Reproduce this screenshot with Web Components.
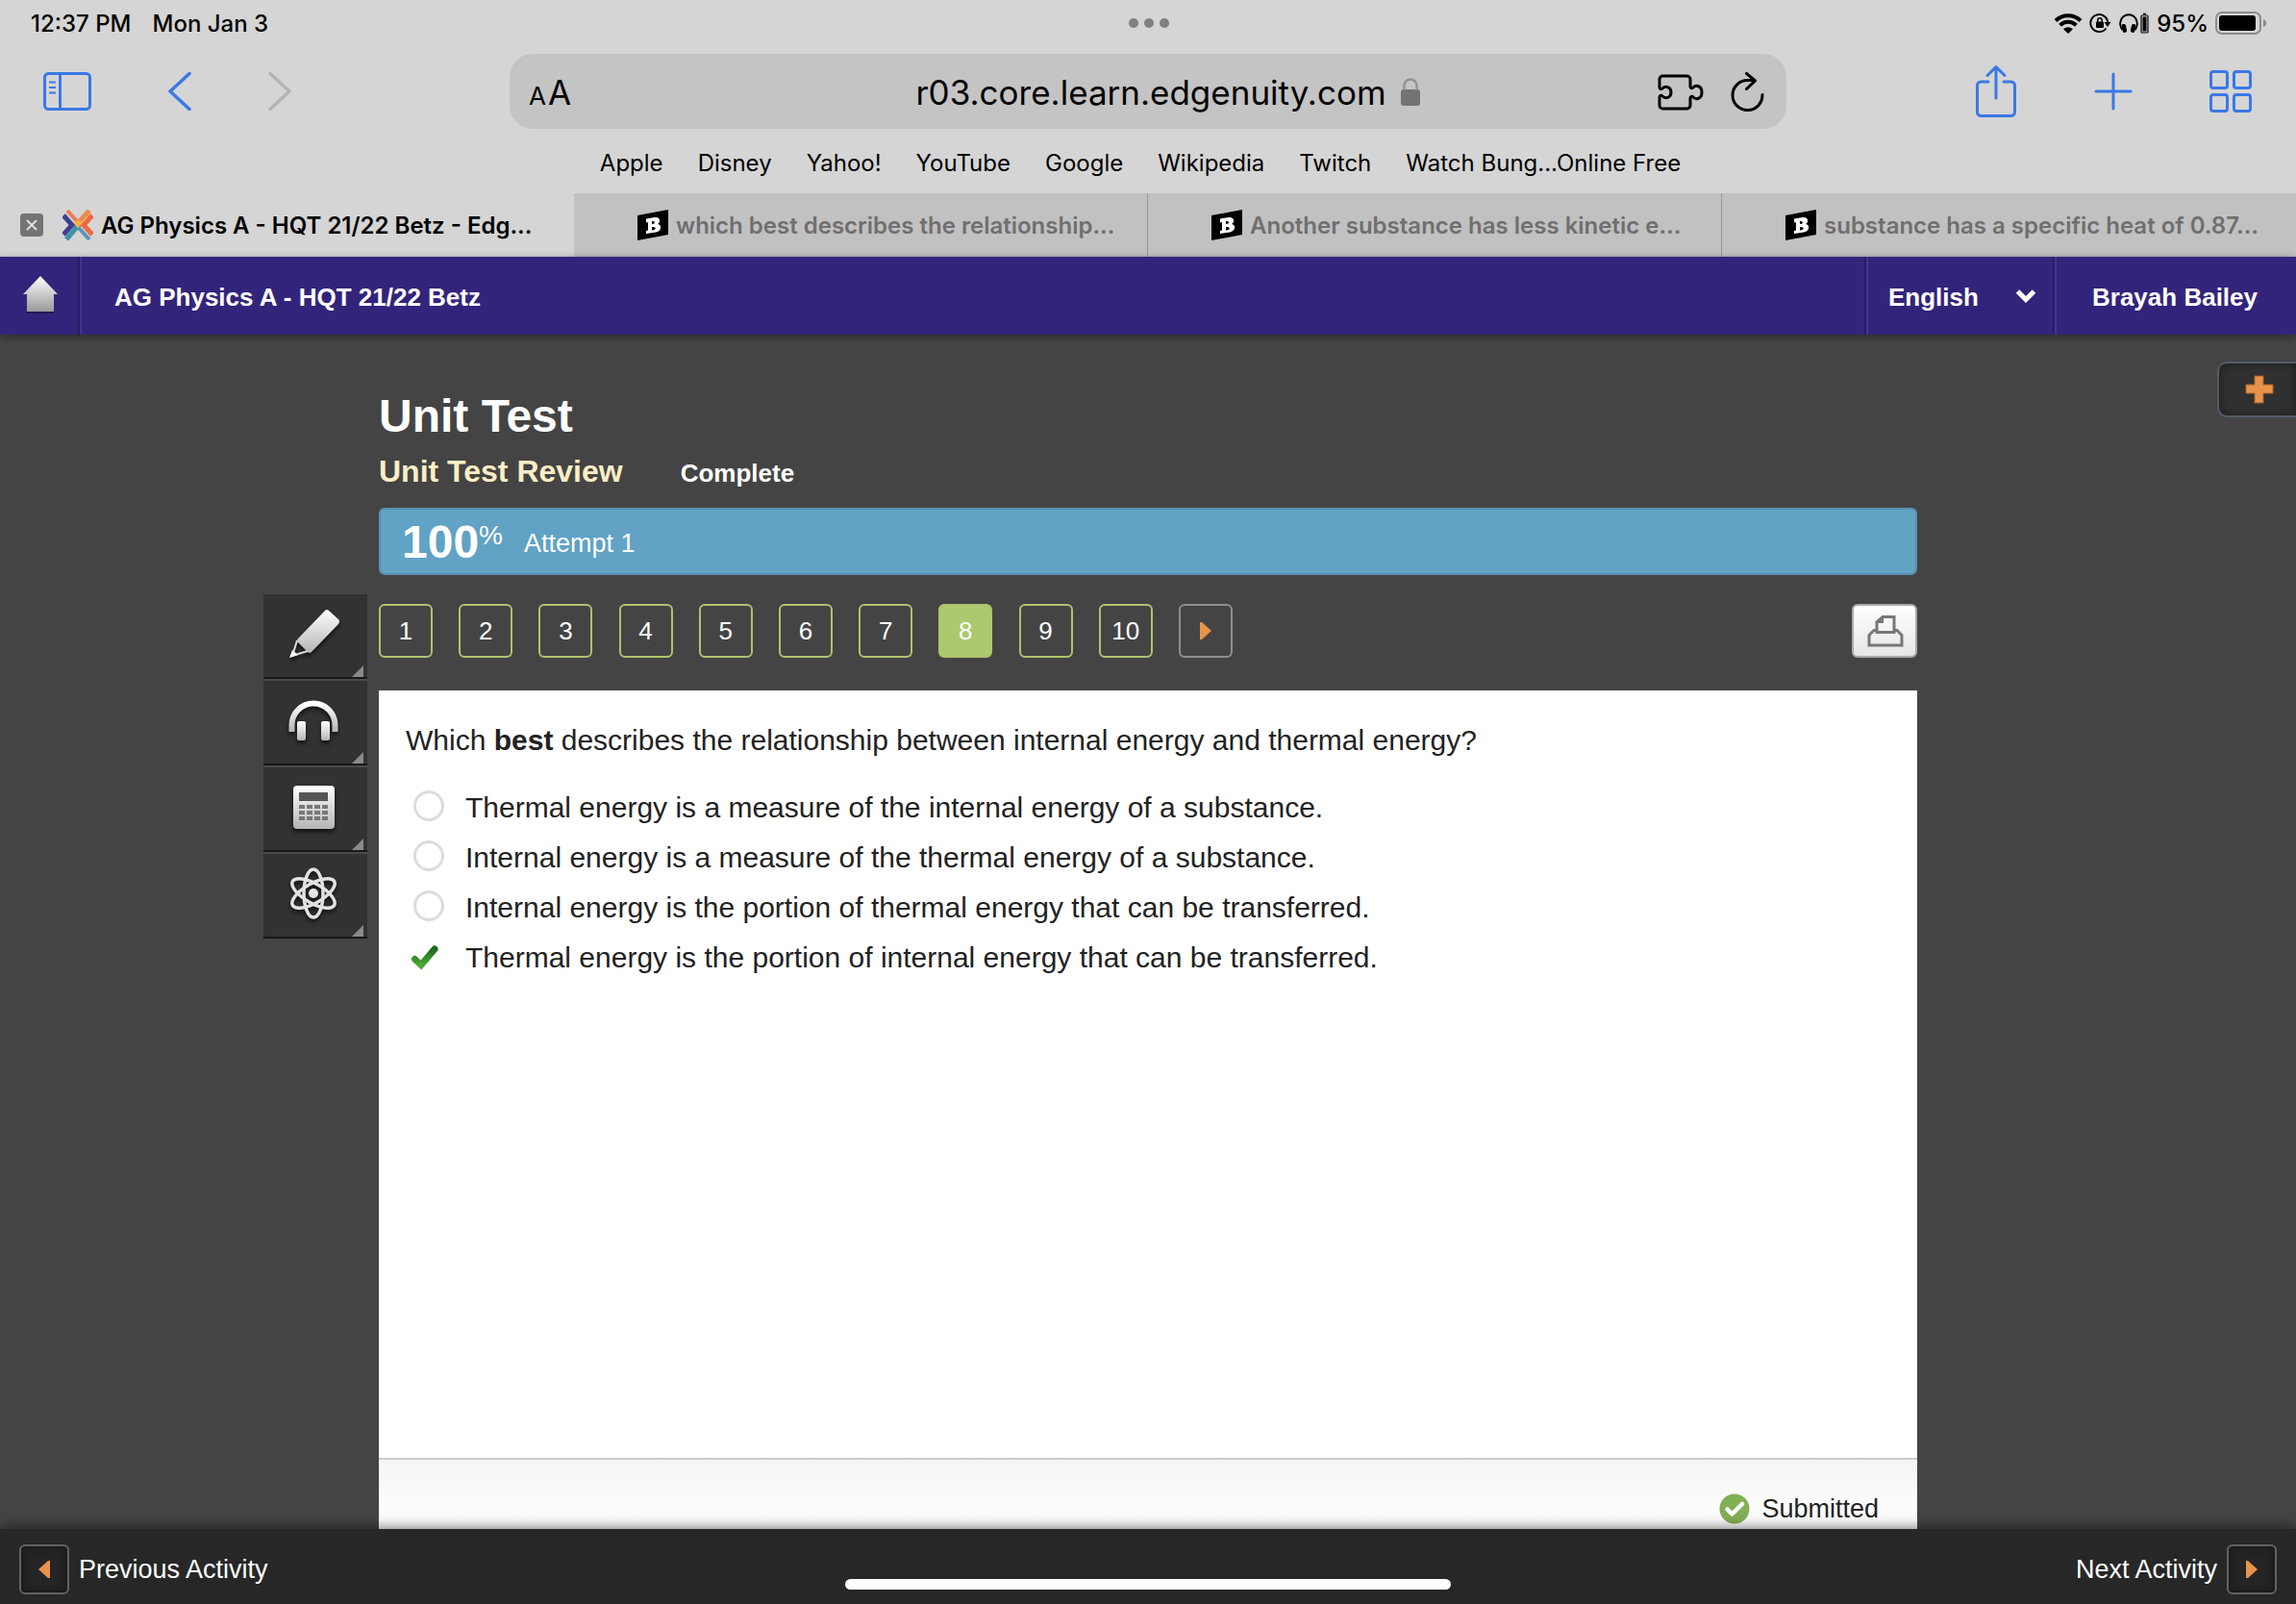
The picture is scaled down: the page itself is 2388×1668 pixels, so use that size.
<!DOCTYPE html>
<html lang="en">
<head>
<meta charset="UTF-8">
<meta name="viewport" content="width=device-width, initial-scale=1">
<title>AG Physics A - HQT 21/22 Betz - Edgenuity</title>
<style>
  html, body {
    margin: 0;
    height: 100%;
  }
  body {
    font-family: "Liberation Sans", Arial, Helvetica, sans-serif;
    font-size: 26px;
    color: #fff;
    background: #444;
  }
</style>
</head>
<body>
<page-shell>
  <browser-chrome slot="chrome"></browser-chrome>
  <course-header slot="header" course="AG Physics A - HQT 21/22 Betz" student="Brayah Bailey"></course-header>
  <activity-stage slot="stage">
    <activity-heading slot="heading" name="Unit Test" step="Unit Test Review" status="Complete" score="100" attempt="Attempt 1"></activity-heading>
    <side-drawer slot="drawer"></side-drawer>
    <tool-palette slot="tools"></tool-palette>
    <question-nav slot="nav" total="10" current="8"></question-nav>
    <question-card slot="card">
      <span slot="question">Which <b>best</b> describes the relationship between internal energy and thermal energy?</span>
    </question-card>
  </activity-stage>
  <activity-footer slot="footer"></activity-footer>
</page-shell>

<script>
const ICONS = {
  wifi: `<svg width="30" height="22" viewBox="0 0 30 22"><g fill="none" stroke="#000" stroke-width="4"><path d="M2 8.500a18.500 18.500 0 0 1 26 0"/><path d="M6.600 13.200a12 12 0 0 1 16.800 0"/></g><path d="M10 17.300a7.200 7.200 0 0 1 10 0L15 22z"/></svg>`,
  rotation: `<svg width="24" height="22" viewBox="0 0 24 22"><path d="M17.500 16.500a9 9 0 1 1 1.800-6" fill="none" stroke="#000" stroke-width="2"/><path d="M15.500 10h7l-3.500 5z"/><rect x="7" y="9.500" width="8" height="6.500" rx="1"/><path d="M8.800 10V8a2.200 2.200 0 0 1 4.400 0v2" fill="none" stroke="#000" stroke-width="1.500"/></svg>`,
  pods: `<svg width="32" height="22" viewBox="0 0 32 22"><path d="M3.500 18C1 15 1 11 1.500 9.500a8.600 8.600 0 0 1 17 0c.500 1.500.500 5.500-2 8.500" fill="none" stroke="#000" stroke-width="2"/><rect x="3" y="12" width="4.500" height="9" rx="2" transform="rotate(-12 5 16)"/><rect x="12.500" y="12" width="4.500" height="9" rx="2" transform="rotate(12 15 16)"/><rect x="23" y="3" width="7" height="18" rx="1" fill="none" stroke="#000" stroke-width="1.200"/><rect x="24.500" y="4.500" width="4" height="15"/><path d="M25 1.500h3" stroke="#000" stroke-width="1.500"/></svg>`,
  battery: `<svg width="54" height="24" viewBox="0 0 54 24"><rect x="1" y="1" width="46" height="22" rx="6" fill="none" stroke="#8c8c8c" stroke-width="2"/><rect x="4" y="4" width="38" height="16" rx="3"/><path d="M50 8c4 1 4 7 0 8z" fill="#8c8c8c"/></svg>`,
  dots: `<svg width="42" height="10" viewBox="0 0 42 10" fill="#808080"><circle cx="5" cy="5" r="5"/><circle cx="21" cy="5" r="5"/><circle cx="37" cy="5" r="5"/></svg>`,
  sidebar: `<svg width="50" height="40" viewBox="0 0 50 40" fill="none" stroke="#3a78e6" stroke-width="3"><rect x="1.500" y="1.500" width="47" height="37" rx="4"/><path d="M17.500 2v36"/><path d="M6 10.500h7M6 16h7M6 21.500h7" stroke-width="2"/></svg>`,
  back: `<svg width="24" height="40" viewBox="0 0 24 40"><path d="M22 1.500L2 20l20 18.500" fill="none" stroke="#3a78e6" stroke-width="3.500" stroke-linecap="round" stroke-linejoin="round"/></svg>`,
  forward: `<svg width="24" height="40" viewBox="0 0 24 40"><path d="M2 1.500L22 20 2 38.500" fill="none" stroke="#b4b4b4" stroke-width="3.500" stroke-linecap="round" stroke-linejoin="round"/></svg>`,
  lock: `<svg width="22" height="30" viewBox="0 0 22 30"><rect x="1" y="12" width="20" height="17" rx="3" fill="#737376"/><path d="M4.500 13V8a6.500 6.500 0 0 1 13 0v5" fill="none" stroke="#939395" stroke-width="2.500"/></svg>`,
  puzzle: `<svg width="48" height="38" viewBox="0 0 48 38" fill="none" stroke="#000" stroke-width="3" stroke-linejoin="round"><path d="M2 14V5.500A3.500 3.500 0 0 1 5.500 2h25A3.500 3.500 0 0 1 34 5.500V13c0 2 2 2 3 1 3-3 9-2 9 5s-6 8-9 5c-1-1-3-1-3 1v7.500a3.500 3.500 0 0 1-3.500 3.500h-25A3.500 3.500 0 0 1 2 32.500V24c0-2 2-2 3-1 3 3 9 2 9-4s-6-7-9-4c-1 1-3 1-3-1z"/></svg>`,
  reload: `<svg width="36" height="42" viewBox="0 0 36 42" fill="none" stroke="#000" stroke-width="3" stroke-linecap="round" stroke-linejoin="round"><path d="M33 23.500A15.500 15.500 0 1 1 17.500 8.500h7"/><path d="M16.500 1.500l9 7.300-9 8.700"/></svg>`,
  share: `<svg width="44" height="56" viewBox="0 0 44 56" fill="none" stroke="#3a78e6" stroke-width="3" stroke-linecap="round" stroke-linejoin="round"><path d="M14 18H6.500a4 4 0 0 0-4 4v27.500a4 4 0 0 0 4 4h31a4 4 0 0 0 4-4V22a4 4 0 0 0-4-4H30"/><path d="M22 35V2.500M13 11.500l9-9 9 9"/></svg>`,
  plus: `<svg width="40" height="40" viewBox="0 0 40 40"><path d="M20 2v36M2 20h36" stroke="#3a78e6" stroke-width="3" stroke-linecap="round"/></svg>`,
  grid: `<svg width="44" height="44" viewBox="0 0 44 44" fill="none" stroke="#3a78e6" stroke-width="3"><rect x="1.500" y="1.500" width="17" height="17" rx="2.500"/><rect x="25.500" y="1.500" width="17" height="17" rx="2.500"/><rect x="1.500" y="25.500" width="17" height="17" rx="2.500"/><rect x="25.500" y="25.500" width="17" height="17" rx="2.500"/></svg>`,
  close: `<svg width="24" height="24" viewBox="0 0 24 24"><rect width="24" height="24" rx="4" fill="#747474"/><path d="M7 7l10 10M17 7L7 17" stroke="#ddd" stroke-width="2"/></svg>`,
  cross: `<svg width="32" height="32" viewBox="0 0 32 32" fill="none" stroke-width="4"><path d="M1 6l9 10-9 10" stroke="#3f3d91" stroke-width="5"/><path d="M31 6l-9 10 9 10" stroke="#f0683f" stroke-width="5"/><path d="M5 1l11 12 4 4" stroke="#ef7a54"/><path d="M28 1L15 15" stroke="#ee8a4a" stroke-width="5"/><path d="M4 31l12-14" stroke="#3c93a8" stroke-width="5"/><path d="M28 31L16 18" stroke="#5c93b8"/><path d="M13 12l3 4 3-4" stroke="#f3b544"/></svg>`,
  brainly: `<svg width="32" height="32" viewBox="0 0 32 32"><path d="M0 6L32 0v26L0 32z"/><path d="M9 9.500l9-1.500c6-.500 6.500 5 3 7 5 1 4 7.500-2 8.500L9 25v-3l2-.500v-8.500l-2 .500zM15 12v3c4 0 4-3.500 0-3zm0 6v3.500c5-.300 5-4 0-3.500z" fill="#fff" fill-rule="evenodd"/></svg>`,
  home: `<svg width="38" height="42" viewBox="0 0 38 42"><defs><linearGradient id="h" x2="0" y2="1"><stop stop-color="#fff"/><stop offset="1" stop-color="#999"/></linearGradient></defs><path d="M19 2l18 19h-4v18H5V21H1z" fill="url(#h)"/><path d="M4 40h30" stroke="#241a58" stroke-width="2"/></svg>`,
  chevron: `<svg width="24" height="18" viewBox="0 0 24 18"><path d="M3.500 4L12 12.500 20.500 4" fill="none" stroke="#fff" stroke-width="5"/></svg>`,
  add: `<svg width="30" height="30" viewBox="0 0 30 30"><path d="M10 1h9v9h10v9H19v10h-9V19H1v-9h9z" fill="#e8934a" stroke="#a9632b" stroke-width="1"/></svg>`,
  pencil: `<svg width="54" height="54" viewBox="0 0 54 54"><path d="M39 3q2-2 4 0l10 9q2 2 0 5L25 46q-2 2-4 0l-10-10q-2-2 0-4z" fill="url(#m)"/><path d="M10 34L5 50l16-5" fill="none" stroke="#ddd" stroke-width="2"/><path d="M5 44l6 5-9 3z" fill="#fff"/></svg>`,
  headphones: `<svg width="54" height="54" viewBox="0 0 54 54"><path d="M4.500 39v-7a22.500 22.500 0 0 1 45 0v7" fill="none" stroke="url(#m)" stroke-width="6"/><rect x="10" y="28" width="9" height="20" rx="2" fill="url(#m)"/><rect x="35" y="28" width="9" height="20" rx="2" fill="url(#m)"/></svg>`,
  calculator: `<svg width="54" height="54" viewBox="0 0 54 54"><rect x="6" y="5" width="43" height="45" rx="4" fill="url(#m)"/><rect x="12" y="12" width="30" height="9" fill="#555"/><g fill="#777"><path d="M12 25h6v4h-6zm8 0h6v4h-6zm8 0h6v4h-6zm8 0h6v4h-6zM12 31h6v4h-6zm8 0h6v4h-6zm8 0h6v4h-6zm8 0h6v4h-6zM12 37h6v4h-6zm8 0h6v4h-6zm8 0h6v4h-6zm8 0h6v4h-6z"/></g></svg>`,
  atom: `<svg width="54" height="54" viewBox="0 0 54 54"><g fill="none" stroke="#e2e2e2" stroke-width="3.500"><ellipse cx="27" cy="27" rx="10" ry="25"/><ellipse cx="27" cy="27" rx="10" ry="25" transform="rotate(60 27 27)"/><ellipse cx="27" cy="27" rx="10" ry="25" transform="rotate(120 27 27)"/></g><circle cx="27" cy="27" r="5" fill="#e6e6e6"/></svg>`,
  print: `<svg width="38" height="34" viewBox="0 0 38 34" fill="none" stroke="#777" stroke-width="3"><path d="M9 16.500H7l-5 5V32h34V21.500l-5-5h-2"/><path d="M10 18.500V8l6-5.500h12v16z"/><path d="M10 9h7V2.500z" fill="#777" stroke="none"/></svg>`,
  right: `<svg width="14" height="20" viewBox="0 0 14 20"><path d="M1 1h2l10 9L3 19H1z" fill="#e8934a"/></svg>`,
  left: `<svg width="14" height="20" viewBox="0 0 14 20"><path d="M13 1h-2L1 10l10 9h2z" fill="#e8934a"/></svg>`,
  tick: `<svg width="32" height="28" viewBox="0 0 32 28"><defs><linearGradient id="t" x2="0" y2="1"><stop stop-color="#1f6a1c"/><stop offset="1" stop-color="#4fa838"/></linearGradient></defs><path d="M3.500 15.500L10 21.500 24 5" fill="none" stroke="url(#t)" stroke-width="7" stroke-linecap="round"/></svg>`,
  done: `<svg width="32" height="32" viewBox="0 0 32 32"><circle cx="16" cy="16" r="15.500" fill="#82b054"/><path d="M8.500 16.500l5 5L24 11" fill="none" stroke="#fff" stroke-width="4.500" stroke-linecap="round" stroke-linejoin="round"/></svg>`
};

const METAL = `<svg width="0" height="0" style="position:absolute"><defs><linearGradient id="m" x2="0" y2="1"><stop stop-color="#fff"/><stop offset="1" stop-color="#b5b5b5"/></linearGradient></defs></svg>`;

const BASE = `
  *, *::before { box-sizing: border-box; }
  svg { display: block; flex-shrink: 0; }
  button, select, input {
    margin: 0;
    padding: 0;
    border: 0;
    background: none;
    font: inherit;
    color: inherit;
  }
  button { display: flex; align-items: center; justify-content: center; }
  a { color: inherit; text-decoration: none; }
`;

class BaseElement extends HTMLElement {
  constructor() {
    super();
    this.attachShadow({ mode: 'open' });
  }

  connectedCallback() {
    this.shadowRoot.innerHTML = `<style>${BASE}${this.styles()}</style>${this.markup()}`;
  }

  attr(name) {
    return this.getAttribute(name) || '';
  }
}

// Whole window: chrome, header, stage, footer
class PageShell extends BaseElement {
  styles() {
    return `
      :host {
        display: grid;
        grid-template-rows: auto auto 1fr auto;
        grid-template-columns: minmax(0, 1fr);
        min-height: 100vh;
      }
    `;
  }
  markup() {
    return `
      <slot name="chrome"></slot>
      <slot name="header"></slot>
      <slot name="stage"></slot>
      <slot name="footer"></slot>
    `;
  }
}

// Status bar, toolbar, bookmarks and tabs
class BrowserChrome extends BaseElement {
  styles() {
    return `
      :host {
        display: block;
        background: #d5d5d5;
        color: #000;
        font-family: Inter, "Liberation Sans", sans-serif;
        font-size: 24px;
      }
      .status {
        display: grid;
        grid-template-columns: 1fr auto 1fr;
        align-items: center;
        height: 48px;
        padding: 0 30px 0 32px;
        font-weight: 500;
      }
      .time { display: flex; gap: 22px; }
      .signals { display: flex; align-items: center; justify-content: flex-end; gap: 7px; }
      .toolbar {
        display: grid;
        grid-template-columns: 1fr minmax(0, 1328px) 1fr;
        align-items: center;
        height: 94px;
      }
      .left { display: flex; gap: 80px; padding-left: 45px; }
      .right { display: flex; align-items: center; justify-content: flex-end; gap: 80px; padding-right: 46px; }
      .address {
        display: grid;
        grid-template-columns: 1fr auto 1fr;
        align-items: center;
        height: 78px;
        padding: 2px 22px 0 20px;
        border-radius: 24px;
        background: #c4c4c4;
        font-size: 35px;
      }
      .size { justify-self: start; align-items: baseline; gap: 2px; }
      .size small { font-size: 26px; }
      .address input { width: 510px; padding-left: 8px; text-align: center; }
      .page { display: flex; align-items: center; gap: 28px; padding-left: 8px; }
      .page svg:first-child { margin-right: auto; }
      .bookmarks {
        display: flex;
        justify-content: center;
        gap: 36px;
        padding: 0 16px 3px 0;
        line-height: 56px;
      }
      .tabs { display: grid; grid-template-columns: repeat(4, 1fr); }
    `;
  }
  markup() {
    const sites = ['Apple', 'Disney', 'Yahoo!', 'YouTube', 'Google', 'Wikipedia', 'Twitch', 'Watch Bung...Online Free'];
    return `
      <div class="status">
        <div class="time"><span>12:37 PM</span><span>Mon Jan 3</span></div>
        ${ICONS.dots}
        <div class="signals">${ICONS.wifi}${ICONS.rotation}${ICONS.pods}<span>95%</span>${ICONS.battery}</div>
      </div>
      <div class="toolbar">
        <div class="left">
          <button aria-label="Sidebar">${ICONS.sidebar}</button>
          <button aria-label="Back">${ICONS.back}</button>
          <button aria-label="Forward">${ICONS.forward}</button>
        </div>
        <div class="address">
          <button class="size" aria-label="Text size"><small>A</small><span>A</span></button>
          <input type="text" aria-label="Address" value="r03.core.learn.edgenuity.com">
          <div class="page">
            ${ICONS.lock}
            <button aria-label="Extensions">${ICONS.puzzle}</button>
            <button aria-label="Reload">${ICONS.reload}</button>
          </div>
        </div>
        <div class="right">
          <button aria-label="Share">${ICONS.share}</button>
          <button aria-label="New tab">${ICONS.plus}</button>
          <button aria-label="All tabs">${ICONS.grid}</button>
        </div>
      </div>
      <nav class="bookmarks">${sites.map(s => `<a href="#">${s}</a>`).join('')}</nav>
      <div class="tabs">
        <browser-tab icon="cross" active>AG Physics A - HQT 21/22 Betz - Edg...</browser-tab>
        <browser-tab icon="brainly">which best describes the relationship...</browser-tab>
        <browser-tab icon="brainly">Another substance has less kinetic e...</browser-tab>
        <browser-tab icon="brainly">substance has a specific heat of 0.87...</browser-tab>
      </div>
    `;
  }
}

class BrowserTab extends BaseElement {
  styles() {
    return `
      :host {
        display: flex;
        align-items: center;
        gap: 8px;
        height: 66px;
        padding-left: 66px;
        background: #c1c1c1;
        border-right: 1px solid #999;
        color: #6f6f6f;
        font-weight: 600;
        white-space: nowrap;
        overflow: hidden;
        box-sizing: border-box;
      }
      :host([active]) {
        padding-left: 21px;
        background: #d5d5d5;
        border-right: 0;
        color: #000;
      }
      :host(:last-child) { border-right: 0; }
      button { margin-right: 12px; }
    `;
  }
  markup() {
    const close = this.hasAttribute('active') ? `<button aria-label="Close tab">${ICONS.close}</button>` : '';
    return `${close}${ICONS[this.attr('icon')]}<slot></slot>`;
  }
}

class CourseHeader extends BaseElement {
  styles() {
    return `
      :host {
        display: flex;
        height: 81px;
        background: #33247b;
        box-shadow: 0 2px 8px rgba(0, 0, 0, 0.4);
        font-weight: bold;
        line-height: 84px;
        position: relative;
      }
      .cell { border-left: 2px solid #43358a; box-shadow: -2px 0 #281c63; }
      .home { width: 83px; padding-bottom: 4px; }
      h1 { flex: 1; margin: 0; padding-left: 34px; font-size: 26px; }
      .language { display: grid; align-items: center; width: 196px; padding: 0 18px 0 21px; }
      select { appearance: none; grid-area: 1 / 1; height: 81px; }
      .language svg { grid-area: 1 / 1; justify-self: end; }
      .student { padding: 0 40px 0 37px; }
    `;
  }
  markup() {
    return `
      <button class="home" aria-label="Home">${ICONS.home}</button>
      <h1 class="cell">${this.attr('course')}</h1>
      <div class="cell language">
        <select aria-label="Language"><option>English</option></select>
        ${ICONS.chevron}
      </div>
      <a class="cell student" href="#">${this.attr('student')}</a>
    `;
  }
}

class ActivityStage extends BaseElement {
  styles() {
    return `
      :host {
        display: grid;
        grid-template-columns: 1fr minmax(0, 1600px) 1fr;
        grid-template-rows: auto auto 1fr;
      }
      .heading, .nav, .card { grid-column: 2; }
      .heading { padding-top: 57px; padding-bottom: 20px; }
      .drawer { grid-area: 1 / 3; justify-self: end; padding-top: 28px; }
      .tools { grid-area: 2 / 1 / 4 / 2; justify-self: end; padding-right: 12px; }
      .nav { grid-row: 2; padding: 10px 0 34px; }
      .card { grid-row: 3; display: grid; }
    `;
  }
  markup() {
    return ['heading', 'drawer', 'tools', 'nav', 'card']
      .map(name => `<div class="${name}"><slot name="${name}"></slot></div>`)
      .join('');
  }
}

class ActivityHeading extends BaseElement {
  styles() {
    return `
      :host { display: block; font-weight: bold; }
      h2 { margin: 0; font-size: 48px; line-height: 56px; }
      .step { display: flex; align-items: baseline; gap: 60px; line-height: 58px; }
      h3 { margin: 0; font-size: 32px; color: #fbeec4; }
      .score {
        display: flex;
        align-items: center;
        height: 70px;
        margin-top: 7px;
        padding-left: 22px;
        border: 2px solid #5990ae;
        border-radius: 6px;
        background: #61a2c5;
        font-weight: normal;
      }
      .score b { font-size: 48px; }
      .percent { padding-bottom: 12px; font-size: 28px; }
      .attempt { padding: 4px 0 0 22px; font-size: 27px; }
    `;
  }
  markup() {
    return `
      <h2>${this.attr('name')}</h2>
      <div class="step"><h3>${this.attr('step')}</h3><span>${this.attr('status')}</span></div>
      <div class="score">
        <b>${this.attr('score')}</b><span class="percent">%</span>
        <span class="attempt">${this.attr('attempt')}</span>
      </div>
    `;
  }
}

class SideDrawer extends BaseElement {
  styles() {
    return `
      :host { display: block; }
      button {
        width: 82px;
        height: 58px;
        padding-left: 4px;
        border: 2px solid #535c66;
        border-right: 0;
        border-radius: 10px 0 0 10px;
        background: #303030;
        box-shadow: inset 0 0 8px #1c1c1c;
      }
    `;
  }
  markup() {
    return `<button aria-label="Open drawer">${ICONS.add}</button>`;
  }
}

class ToolPalette extends BaseElement {
  styles() {
    return `
      :host { display: block; }
      button {
        position: relative;
        width: 108px;
        height: 90px;
        padding: 0 4px 4px 0;
        border-top: 2px solid #4a4a4a;
        border-bottom: 2px solid #181818;
        background: #323232;
      }
      button:first-of-type { height: 88px; border-top: 0; }
      button svg { filter: drop-shadow(0 3px 2px #111); }
      /* corner flag */
      button::after {
        content: "";
        position: absolute;
        right: 4px;
        bottom: 0;
        border: 6px solid transparent;
        border-right-color: #8a8a8a;
        border-bottom-color: #8a8a8a;
      }
    `;
  }
  markup() {
    const tools = { pencil: 'Highlighter', headphones: 'Listen', calculator: 'Calculator', atom: 'Periodic table' };
    return METAL + Object.keys(tools)
      .map(key => `<button aria-label="${tools[key]}">${ICONS[key]}</button>`)
      .join('');
  }
}

class QuestionNav extends BaseElement {
  styles() {
    return `
      :host { display: flex; justify-content: space-between; }
      .pages { display: flex; justify-content: space-between; width: 888px; }
      .pages button {
        width: 56px;
        height: 56px;
        border: 2px solid #aec36c;
        border-radius: 6px;
      }
      .pages .current { background: #adc96e; }
      .pages .next { border-color: #8e8e8e; }
      .print {
        width: 68px;
        height: 56px;
        padding-left: 2px;
        border: 2px solid #aaa;
        border-radius: 6px;
        background: linear-gradient(#fff, #e6e6e6);
      }
    `;
  }
  markup() {
    let pages = '';
    for (let i = 1; i <= Number(this.attr('total')); i++) {
      pages += `<button class="${i === Number(this.attr('current')) ? 'current' : ''}">${i}</button>`;
    }
    return `
      <div class="pages">${pages}<button class="next" aria-label="Next question">${ICONS.right}</button></div>
      <button class="print" aria-label="Print">${ICONS.print}</button>
    `;
  }
}

class QuestionCard extends BaseElement {
  styles() {
    return `
      :host {
        display: flex;
        flex-direction: column;
        background: #fff;
        color: #222;
        font-size: 30px;
      }
      form { flex: 1; padding: 32px 28px; }
      p { margin: 0 0 24px; line-height: 40px; }
      label {
        display: grid;
        grid-template-columns: 54px 1fr;
        align-items: center;
        padding-left: 8px;
        line-height: 52px;
      }
      input {
        appearance: none;
        grid-area: 1 / 1;
        width: 32px;
        height: 32px;
        margin-bottom: 4px;
        border: 3px solid #dcdcdc;
        border-radius: 50%;
      }
      input:checked { border-color: transparent; }
      label svg { grid-area: 1 / 1; margin-left: -2px; }
      .state {
        display: flex;
        align-items: center;
        justify-content: flex-end;
        gap: 12px;
        height: 74px;
        padding: 30px 40px 0 0;
        border-top: 2px solid #ccc;
        background: linear-gradient(#f5f5f5, #fff);
        font-size: 27px;
      }
    `;
  }
  markup() {
    const answers = [
      'Thermal energy is a measure of the internal energy of a substance.',
      'Internal energy is a measure of the thermal energy of a substance.',
      'Internal energy is the portion of thermal energy that can be transferred.',
      'Thermal energy is the portion of internal energy that can be transferred.'
    ];
    const correct = 3;
    return `
      <form>
        <p><slot name="question"></slot></p>
        ${answers.map((text, i) => `
          <label>
            <input type="radio" name="answer"${i === correct ? ' checked' : ''}>
            ${i === correct ? ICONS.tick : ''}
            <span>${text}</span>
          </label>
        `).join('')}
      </form>
      <div class="state">${ICONS.done}<span>Submitted</span></div>
    `;
  }
}

class ActivityFooter extends BaseElement {
  styles() {
    return `
      :host {
        display: flex;
        align-items: center;
        justify-content: space-between;
        height: 78px;
        padding: 6px 20px 0;
        box-sizing: border-box;
        position: relative;
        background: #272727;
        box-shadow: 0 -2px 12px rgba(0, 0, 0, 0.5);
        font-size: 27px;
      }
      a { display: flex; align-items: center; gap: 10px; }
      .box {
        display: grid;
        place-items: center;
        width: 52px;
        height: 52px;
        border: 2px solid #626262;
        border-radius: 6px;
        background: #242424;
        box-shadow: inset 0 0 8px #151515;
      }
      /* system home indicator floats over the page */
      .indicator {
        position: absolute;
        left: 50%;
        bottom: 15px;
        width: 630px;
        height: 11px;
        margin-left: -315px;
        border-radius: 6px;
        background: #fff;
      }
    `;
  }
  markup() {
    return `
      <a href="#"><span class="box">${ICONS.left}</span>Previous Activity</a>
      <a href="#">Next Activity<span class="box">${ICONS.right}</span></a>
      <div class="indicator"></div>
    `;
  }
}

customElements.define('page-shell', PageShell);
customElements.define('browser-chrome', BrowserChrome);
customElements.define('browser-tab', BrowserTab);
customElements.define('course-header', CourseHeader);
customElements.define('activity-stage', ActivityStage);
customElements.define('activity-heading', ActivityHeading);
customElements.define('side-drawer', SideDrawer);
customElements.define('tool-palette', ToolPalette);
customElements.define('question-nav', QuestionNav);
customElements.define('question-card', QuestionCard);
customElements.define('activity-footer', ActivityFooter);
</script>
</body>
</html>
